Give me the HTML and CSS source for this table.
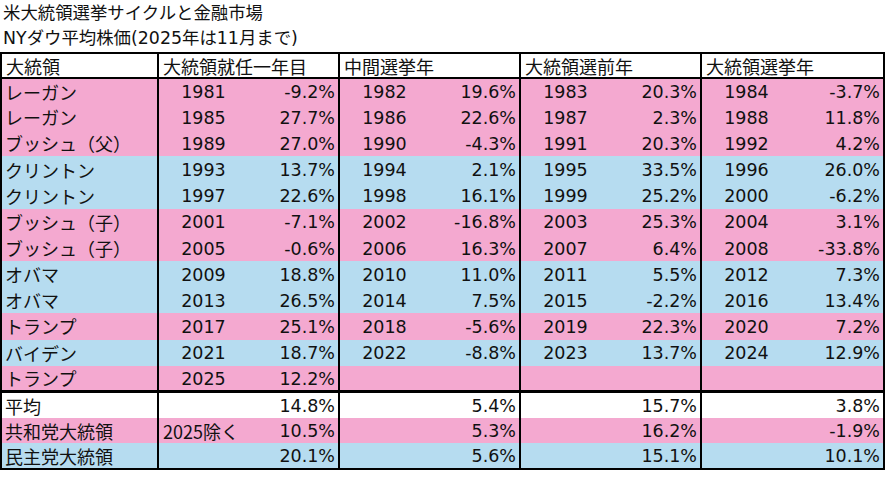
FILE: index.html
```html
<!DOCTYPE html>
<html lang="ja">
<head>
<meta charset="utf-8">
<title>米大統領選挙サイクルと金融市場</title>
<link rel="stylesheet" href="styles.css">
</head>
<body>
<div class="title">
  <div class="title-line">米大統領選挙サイクルと金融市場</div>
  <div class="title-line">NYダウ平均株価(2025年は11月まで)</div>
</div>
<table class="cycle">
  <colgroup>
    <col class="c-name">
    <col class="c-year"><col class="c-pct">
    <col class="c-year"><col class="c-pct">
    <col class="c-year"><col class="c-pct">
    <col class="c-year"><col class="c-pct-last">
  </colgroup>
  <thead>
    <tr class="head">
      <th>大統領</th>
      <th colspan="2" class="grp">大統領就任一年目</th>
      <th colspan="2" class="grp">中間選挙年</th>
      <th colspan="2" class="grp">大統領選前年</th>
      <th colspan="2" class="grp">大統領選挙年</th>
    </tr>
  </thead>
  <tbody class="data">
    <tr class="rep"><td class="name">レーガン</td><td class="yr">1981</td><td class="pct">-9.2%</td><td class="yr">1982</td><td class="pct">19.6%</td><td class="yr">1983</td><td class="pct">20.3%</td><td class="yr">1984</td><td class="pct">-3.7%</td></tr>
    <tr class="rep"><td class="name">レーガン</td><td class="yr">1985</td><td class="pct">27.7%</td><td class="yr">1986</td><td class="pct">22.6%</td><td class="yr">1987</td><td class="pct">2.3%</td><td class="yr">1988</td><td class="pct">11.8%</td></tr>
    <tr class="rep"><td class="name">ブッシュ（父）</td><td class="yr">1989</td><td class="pct">27.0%</td><td class="yr">1990</td><td class="pct">-4.3%</td><td class="yr">1991</td><td class="pct">20.3%</td><td class="yr">1992</td><td class="pct">4.2%</td></tr>
    <tr class="dem"><td class="name">クリントン</td><td class="yr">1993</td><td class="pct">13.7%</td><td class="yr">1994</td><td class="pct">2.1%</td><td class="yr">1995</td><td class="pct">33.5%</td><td class="yr">1996</td><td class="pct">26.0%</td></tr>
    <tr class="dem"><td class="name">クリントン</td><td class="yr">1997</td><td class="pct">22.6%</td><td class="yr">1998</td><td class="pct">16.1%</td><td class="yr">1999</td><td class="pct">25.2%</td><td class="yr">2000</td><td class="pct">-6.2%</td></tr>
    <tr class="rep"><td class="name">ブッシュ（子）</td><td class="yr">2001</td><td class="pct">-7.1%</td><td class="yr">2002</td><td class="pct">-16.8%</td><td class="yr">2003</td><td class="pct">25.3%</td><td class="yr">2004</td><td class="pct">3.1%</td></tr>
    <tr class="rep"><td class="name">ブッシュ（子）</td><td class="yr">2005</td><td class="pct">-0.6%</td><td class="yr">2006</td><td class="pct">16.3%</td><td class="yr">2007</td><td class="pct">6.4%</td><td class="yr">2008</td><td class="pct">-33.8%</td></tr>
    <tr class="dem"><td class="name">オバマ</td><td class="yr">2009</td><td class="pct">18.8%</td><td class="yr">2010</td><td class="pct">11.0%</td><td class="yr">2011</td><td class="pct">5.5%</td><td class="yr">2012</td><td class="pct">7.3%</td></tr>
    <tr class="dem"><td class="name">オバマ</td><td class="yr">2013</td><td class="pct">26.5%</td><td class="yr">2014</td><td class="pct">7.5%</td><td class="yr">2015</td><td class="pct">-2.2%</td><td class="yr">2016</td><td class="pct">13.4%</td></tr>
    <tr class="rep"><td class="name">トランプ</td><td class="yr">2017</td><td class="pct">25.1%</td><td class="yr">2018</td><td class="pct">-5.6%</td><td class="yr">2019</td><td class="pct">22.3%</td><td class="yr">2020</td><td class="pct">7.2%</td></tr>
    <tr class="dem"><td class="name">バイデン</td><td class="yr">2021</td><td class="pct">18.7%</td><td class="yr">2022</td><td class="pct">-8.8%</td><td class="yr">2023</td><td class="pct">13.7%</td><td class="yr">2024</td><td class="pct">12.9%</td></tr>
    <tr class="rep"><td class="name">トランプ</td><td class="yr">2025</td><td class="pct">12.2%</td><td class="yr"></td><td class="pct"></td><td class="yr"></td><td class="pct"></td><td class="yr"></td><td class="pct"></td></tr>
  </tbody>
  <tbody class="summary">
    <tr class="avg"><td class="name">平均</td><td class="yr"></td><td class="pct">14.8%</td><td class="yr"></td><td class="pct">5.4%</td><td class="yr"></td><td class="pct">15.7%</td><td class="yr"></td><td class="pct">3.8%</td></tr>
    <tr class="rep"><td class="name">共和党大統領</td><td class="note">2025除く</td><td class="pct">10.5%</td><td class="yr"></td><td class="pct">5.3%</td><td class="yr"></td><td class="pct">16.2%</td><td class="yr"></td><td class="pct">-1.9%</td></tr>
    <tr class="dem"><td class="name">民主党大統領</td><td class="yr"></td><td class="pct">20.1%</td><td class="yr"></td><td class="pct">5.6%</td><td class="yr"></td><td class="pct">15.1%</td><td class="yr"></td><td class="pct">10.1%</td></tr>
  </tbody>
</table>
</body>
</html>
```
FILE: styles.css
```css
html, body {
  margin: 0;
  padding: 0;
  background: #ffffff;
}
body {
  font-family: "Noto Sans CJK JP", "Noto Sans", sans-serif;
  color: #111111;
  width: 886px;
  height: 478px;
  overflow: hidden;
}
.title {
  padding: 1px 0 0 3px;
  height: 52px;
  box-sizing: border-box;
  font-family: "DejaVu Sans", "Noto Sans CJK JP", sans-serif;
}
.title-line {
  font-size: 17.4px;
  line-height: 25px;
  height: 25px;
  white-space: nowrap;
}
.cycle {
  border-collapse: collapse;
  table-layout: fixed;
  width: 884px;
  font-size: 18px;
  border: 2px solid #000;
}
.c-name { width: 157px; }
.c-year { width: 90px; }
.c-pct { width: 91px; }
.c-pct-last { width: 93px; }
.cycle th, .cycle td {
  padding: 0;
  white-space: nowrap;
  overflow: hidden;
  vertical-align: middle;
  line-height: 22px;
}
.head th {
  height: 23px;
  font-weight: normal;
  text-align: left;
  padding-left: 4px;
  background: #ffffff;
  border-bottom: 2px solid #000;
  border-right: 2px solid #000;
}
.data tr { height: 26.17px; }
.summary tr { height: 25.8px; }
.summary tr:first-child td { border-top: 3px solid #000; }
.rep td { background: #f4a9d0; }
.dem td { background: #b6dcf0; }
.avg td { background: #ffffff; }
.name {
  text-align: left;
  padding-left: 3px !important;
  border-right: 2px solid #000;
}
.yr {
  text-align: center;
  font-family: "DejaVu Sans", sans-serif;
  font-size: 17.5px;
  padding-top: 1px !important;
}
.note {
  text-align: left;
  padding-left: 4px !important;
}
.pct {
  text-align: right;
  padding-right: 3px !important;
  padding-top: 1px !important;
  border-right: 2px solid #000;
  font-family: "DejaVu Sans", sans-serif;
  font-size: 17.5px;
}
```
